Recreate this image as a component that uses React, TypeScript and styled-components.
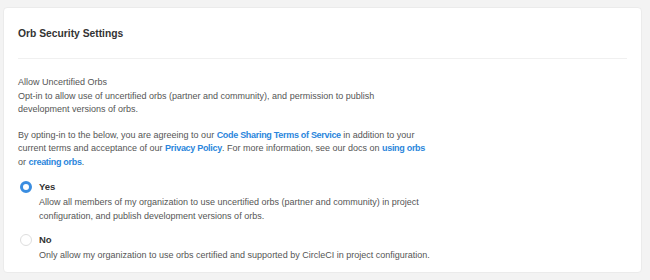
import styled, { createGlobalStyle } from 'styled-components'

const GlobalStyle = createGlobalStyle`
  html, body {
    margin: 0;
    padding: 0;
    background: #f3f3f3;
    font-family: 'Liberation Sans', Arial, sans-serif;
  }
`

const Page = styled.div`
  width: 650px;
  height: 280px;
  padding: 7px 8px 7px 3px;
  box-sizing: border-box;
`

const Card = styled.section`
  background: #fff;
  border: 1px solid #ebebeb;
  border-radius: 4px;
  height: 266px;
  box-sizing: border-box;
  padding: 0 14px 0 14px;
  color: #555;
`

const Header = styled.h2`
  margin: 0;
  padding: 19px 0 17px 0;
  font-size: 10.3px;
  line-height: 14px;
  font-weight: 700;
  color: #333;
  border-bottom: 1px solid #f0f0f0;
`

const Body = styled.div`
  padding-top: 17px;
  font-size: 9px;
  line-height: 13.5px;
`

const Para = styled.p`
  margin: 0 0 12px 0;
  &:nth-child(2) {
    margin-top: 1px;
    margin-bottom: 11px;
  }
`

const Link = styled.a`
  color: #2b86dc;
  font-weight: 700;
  letter-spacing: -0.3px;
  text-decoration: none;
`

const Option = styled.label`
  display: flex;
  gap: 7px;
  align-items: flex-start;
  margin-bottom: 10px;
`

const Radio = styled.span<{ $checked?: boolean }>`
  flex: none;
  width: 12px;
  height: 12px;
  margin-top: 1px;
  margin-left: 2px;
  border-radius: 50%;
  box-sizing: border-box;
  border: ${p => (p.$checked ? '3px solid #3a8de0' : '1px solid #dedede')};
  background: #fff;
`

const OptionTitle = styled.div`
  font-size: 9.5px;
  line-height: 14px;
  font-weight: 700;
  color: #333;
  margin-bottom: 2px;
`

const OptionText = styled.div`
  font-size: 9px;
  line-height: 13.5px;
`

export default function App() {
  return (
    <Page>
      <GlobalStyle />
      <Card>
        <Header>Orb Security Settings</Header>
        <Body>
          <Para>
            Allow Uncertified Orbs
            <br />
            Opt-in to allow use of uncertified orbs (partner and community), and permission to publish
            <br />
            development versions of orbs.
          </Para>
          <Para>
            By opting-in to the below, you are agreeing to our <Link>Code Sharing Terms of Service</Link> in addition to your
            <br />
            current terms and acceptance of our <Link>Privacy Policy</Link>. For more information, see our docs on{' '}
            <Link>using orbs</Link>
            <br />
            or <Link>creating orbs</Link>.
          </Para>
          <Option>
            <Radio $checked />
            <div>
              <OptionTitle>Yes</OptionTitle>
              <OptionText>
                Allow all members of my organization to use uncertified orbs (partner and community) in project
                <br />
                configuration, and publish development versions of orbs.
              </OptionText>
            </div>
          </Option>
          <Option>
            <Radio />
            <div>
              <OptionTitle>No</OptionTitle>
              <OptionText>
                Only allow my organization to use orbs certified and supported by CircleCI in project configuration.
              </OptionText>
            </div>
          </Option>
        </Body>
      </Card>
    </Page>
  )
}
